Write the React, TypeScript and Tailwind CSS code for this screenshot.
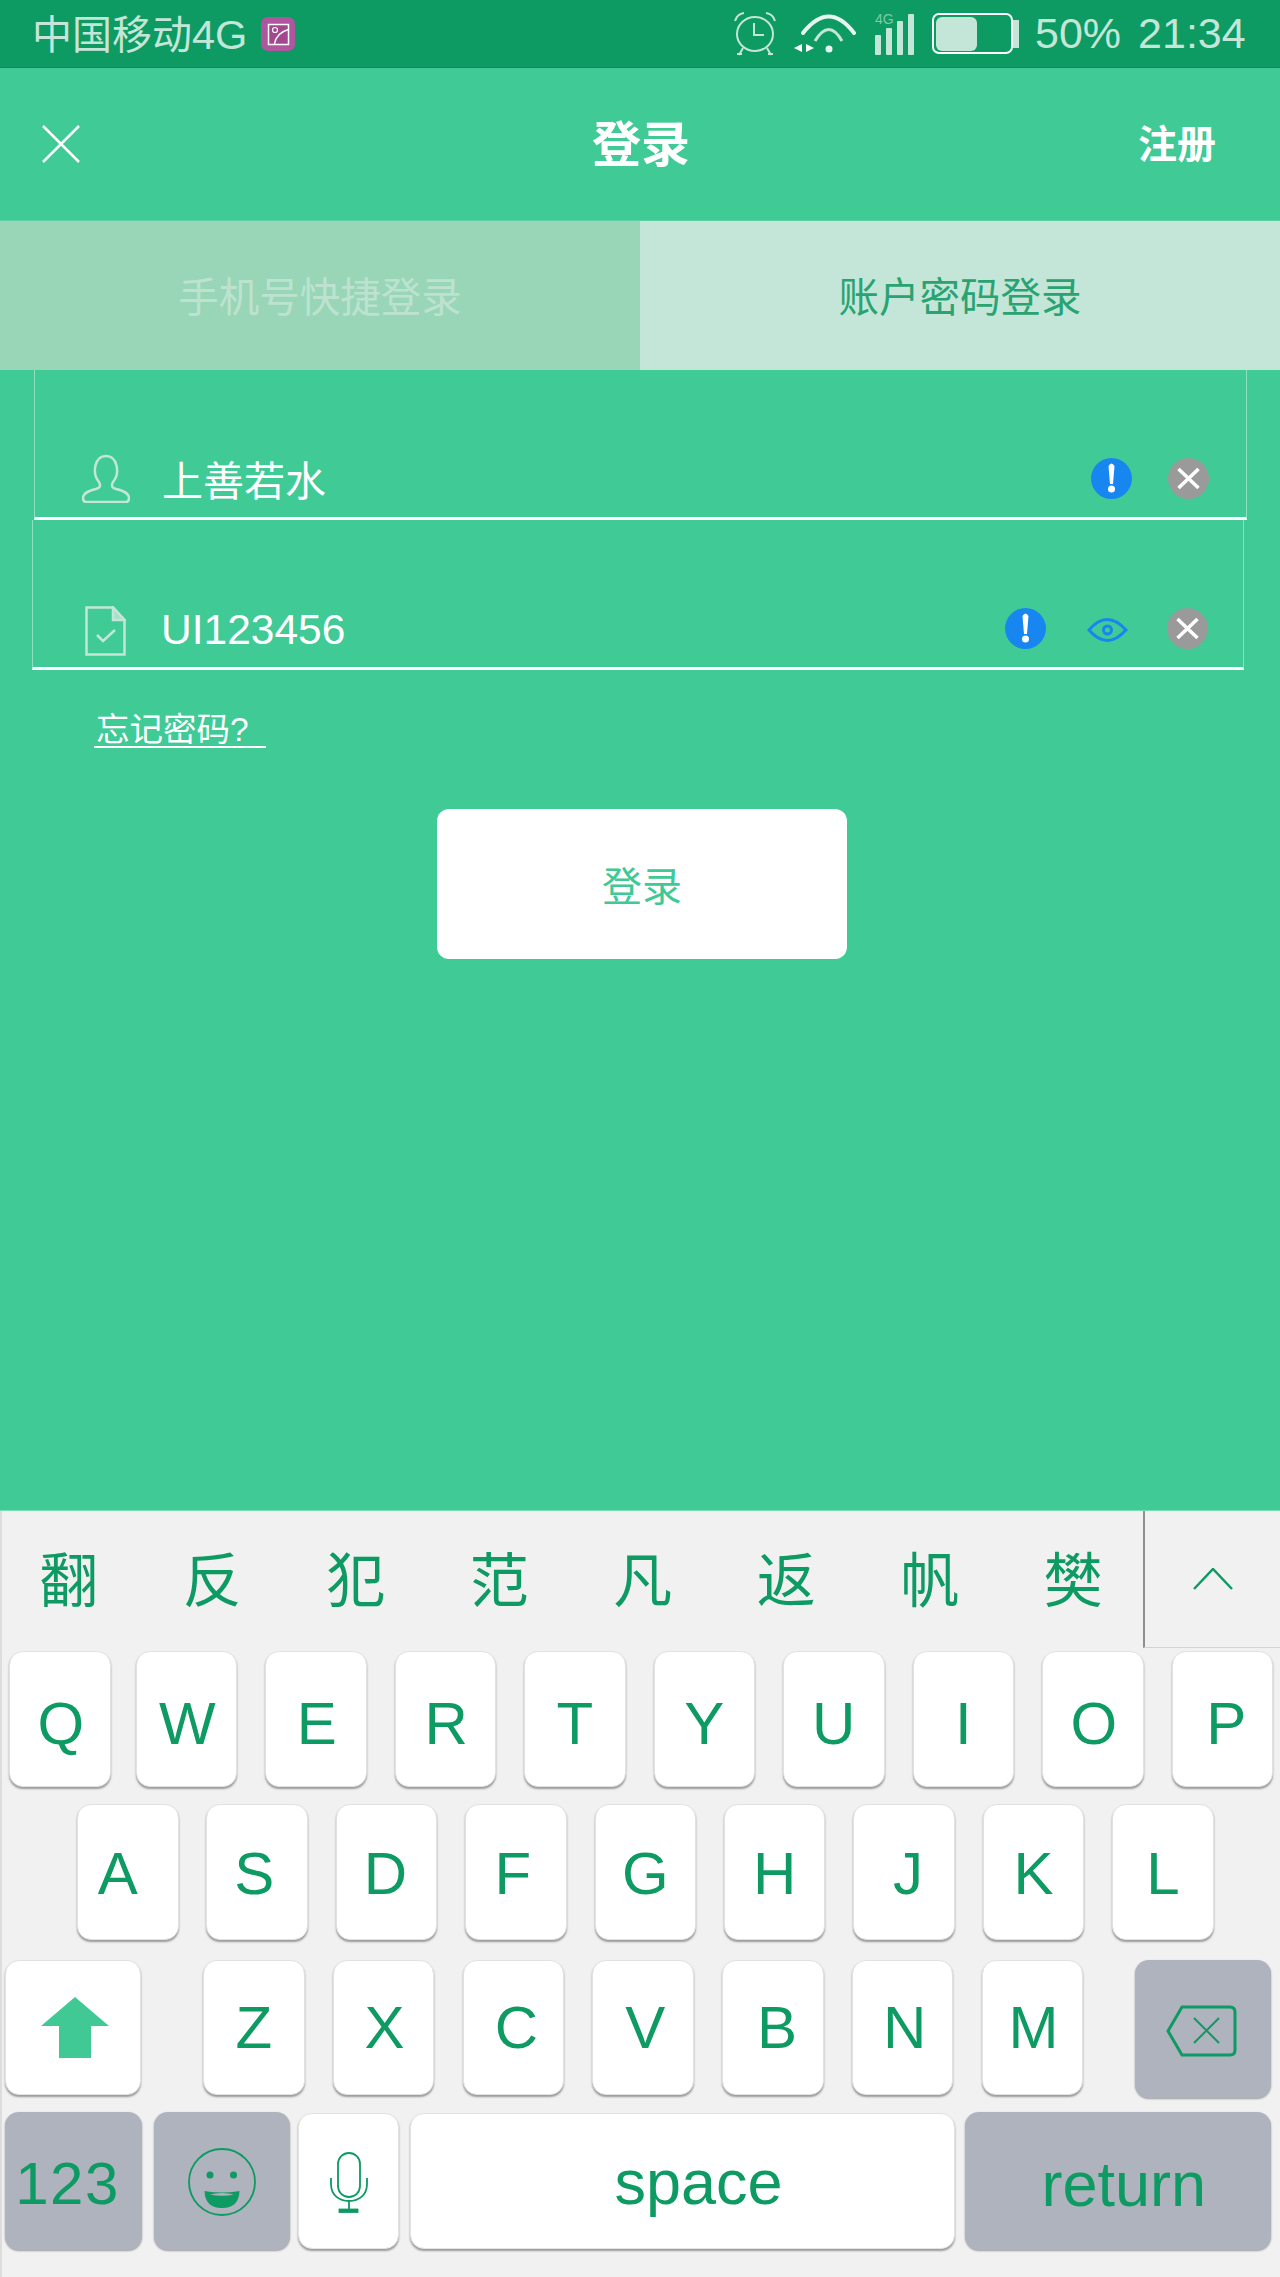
const cjk = "font-['Noto_Sans_CJK_SC','Liberation_Sans',sans-serif]";
const latin = "font-['Liberation_Sans',sans-serif]";

// the letters don't sit dead centre on the reference keys, so each gets its own nudge
const row1 = [
  { k: 'W', c: 'pt-[10px] pl-[2px]' },
  { k: 'E', c: 'pt-[10px] pl-[2px]' },
  { k: 'R', c: 'pt-[10px] pl-[2px]' },
  { k: 'T', c: 'pt-[10px]' },
  { k: 'Y', c: 'pt-[10px]' },
  { k: 'U', c: 'pt-[10px]' },
  { k: 'I', c: 'pt-[10px]' },
  { k: 'O', c: 'pt-[10px] pl-[2px]' },
  { k: 'P', c: 'pt-[10px] pl-[8px]' },
];
const row2 = [
  { k: 'A', c: 'pt-[4px] pr-[20px]' },
  { k: 'S', c: 'pt-[4px] pr-[6px]' },
  { k: 'D', c: 'pt-[4px] pr-[2px]' },
  { k: 'F', c: 'pt-[4px] pr-[6px]' },
  { k: 'G', c: 'pt-[4px]' },
  { k: 'H', c: 'pt-[4px]' },
  { k: 'J', c: 'pt-[4px] pl-[8px]' },
  { k: 'K', c: 'pt-[4px]' },
  { k: 'L', c: 'pt-[4px]' },
];
const row3 = [
  { k: 'Z', c: '' },
  { k: 'X', c: 'pl-[2px]' },
  { k: 'C', c: 'pl-[6px]' },
  { k: 'V', c: 'pl-[4px]' },
  { k: 'B', c: 'pl-[8px]' },
  { k: 'N', c: 'pl-[4px]' },
  { k: 'M', c: 'pl-[2px]' },
];
const candidates = ['翻', '反', '犯', '范', '凡', '返', '帆', '樊'];

function Key({ label, className = '' }: { label: string; className?: string }) {
  return (
    <div className={`flex h-full w-[101.5px] shrink-0 items-center justify-center rounded-[14px] border border-[#e2e2e2] bg-white text-[60px] text-[#0d9a63] shadow-[0_2px_2px_#9a9a9a] ${className}`}>
      {label}
    </div>
  );
}

function InfoIcon() {
  return (
    <svg width="41" height="41" viewBox="0 0 41 41" className="shrink-0">
      <circle cx="20.5" cy="20.5" r="20.5" fill="#1886f1" />
      <path d="M17.5 8 Q20.5 3 23.5 8 L22 26 H19 Z" fill="#fff" />
      <circle cx="20.5" cy="31" r="3.5" fill="#fff" />
    </svg>
  );
}

function ClearIcon() {
  return (
    <svg width="41" height="41" viewBox="0 0 41 41" className="shrink-0">
      <circle cx="20.5" cy="20.5" r="20.5" fill="#9a9a9a" />
      <path d="M10.5 11 L30.5 30 M30.5 11 L10.5 30" stroke="#fff" strokeWidth="3.5" />
    </svg>
  );
}

export default function App() {
  return (
    <div className={`flex h-[2277px] w-[1280px] flex-col overflow-hidden bg-[#40ca96] ${cjk}`}>
      {/* status bar */}
      <div className="flex h-[68px] shrink-0 items-center border-b border-[#0a8a58] bg-[#0d9a63] text-[#c4e6d8]">
        <span className="mt-[1px] ml-[32px] w-[216px] whitespace-nowrap text-[40px] leading-none">中国移动<span className={`text-[41.5px] ${latin}`}>4G</span></span>
        <svg width="34" height="34" viewBox="0 0 34 34" className="ml-[13px] shrink-0">
          <rect width="34" height="34" rx="7" fill="#b0559f" />
          <rect x="7.5" y="7.5" width="20" height="20" fill="#a3488f" stroke="#fff" strokeWidth="1.5" />
          <circle cx="14" cy="13" r="2.5" fill="none" stroke="#fff" strokeWidth="1.2" />
          <path d="M13.5 27 Q15 16 27.5 12.5" fill="none" stroke="#fff" strokeWidth="1.3" />
        </svg>
        <svg width="46" height="44" viewBox="0 0 46 44" className="ml-[437px] shrink-0" fill="none" stroke="#c4e6d8" strokeWidth="2">
          <ellipse cx="23" cy="22" rx="18" ry="17" />
          <path d="M22 11 V23 H32" />
          <path d="M3 9 Q5 2 12 1 M43 9 Q41 2 34 1" />
          <path d="M11 36 L7 43 M35 36 L39 43 M5 42 H10 M36 42 H41" />
        </svg>
        <svg width="62" height="42" viewBox="0 0 62 42" className="ml-[16px] shrink-0" fill="none">
          <path d="M9 20 Q35 -13 60 20" stroke="#e6f5ee" strokeWidth="4" strokeLinecap="round" />
          <path d="M21 28 Q35 5 48 28" stroke="#c4e6d8" strokeWidth="3" />
          <circle cx="35" cy="36" r="3.5" fill="#e6f5ee" />
          <path d="M0 35 L8 31 V39 Z M20 35 L12 31 V39 Z" fill="#fff" />
        </svg>
        <div className="relative ml-[19px] flex h-[42px] w-[39px] shrink-0 items-end justify-between">
          <span className={`absolute top-[-1px] left-0 text-[14px] leading-none text-[#7fc9a8] ${latin}`}>4G</span>
          <div className="h-[20px] w-[6px] rounded-[1px] bg-[#c4e6d8]" />
          <div className="h-[27px] w-[6px] rounded-[1px] bg-[#c4e6d8]" />
          <div className="h-[34px] w-[6px] rounded-[1px] bg-[#c4e6d8]" />
          <div className="h-[41px] w-[6px] rounded-[1px] bg-[#c4e6d8]" />
        </div>
        <div className="ml-[18px] flex h-[41px] w-[81px] shrink-0 items-center rounded-[7px] border-2 border-white pl-[2px]">
          <div className="h-[34px] w-[41px] rounded-[6px] bg-[#c4e6d8]" />
        </div>
        <div className="h-[28px] w-[6px] shrink-0 bg-[#c4e6d8]" />
        <span className={`ml-[16px] whitespace-nowrap text-[43px] leading-none ${latin}`}>50%</span>
        <span className={`ml-[17px] whitespace-nowrap text-[43px] leading-none ${latin}`}>21:34</span>
      </div>

      {/* nav bar */}
      <div className="flex h-[152px] shrink-0 items-center text-white">
        <svg width="38" height="38" viewBox="0 0 38 38" className="ml-[42px] shrink-0">
          <path d="M1 1 L37 37 M37 1 L1 37" stroke="#fff" strokeWidth="2.5" />
        </svg>
        <div className="mb-[8px] ml-[511px] w-[100px] text-center text-[49px] leading-none font-bold whitespace-nowrap">登录</div>
        <div className="mb-[6px] ml-[447px] text-[39px] leading-none font-bold whitespace-nowrap">注册</div>
      </div>

      {/* tabs */}
      <div className="flex h-[150px] shrink-0 border-t border-[#5fd0a5] text-[40.5px]">
        <div className="flex w-[640px] items-center justify-center bg-[#98d6b7] text-[#bde2cf]">手机号快捷登录</div>
        <div className="flex w-[640px] items-center justify-center bg-[#c4e6d8] text-[#2aa373]">账户密码登录</div>
      </div>

      {/* account */}
      <div className="ml-[34px] flex h-[150px] w-[1213px] shrink-0 items-end border-x border-b-[3px] border-x-[#8fe0c0] border-b-white pb-[9px]">
        <div className="flex h-[60px] w-full items-center">
          <svg width="48" height="49" viewBox="0 0 48 49" className="ml-[47px] shrink-0" fill="none" stroke="#c4e6d8" strokeWidth="2.5">
            <path d="M17 28 C10 20 12 2 24 2 C36 2 38 20 31 28 C29 32 30 34 34 35 C42 37 47 39 47 44 C47 47 46 48 44 48 H4 C2 48 1 47 1 44 C1 39 6 37 14 35 C18 34 19 32 17 28 Z" />
          </svg>
          <span className="ml-[32px] flex-1 text-[41px] leading-none text-white">上善若水</span>
          <InfoIcon />
          <div className="ml-[36px] mr-[37px]"><ClearIcon /></div>
        </div>
      </div>

      {/* password */}
      <div className="ml-[32px] flex h-[150px] w-[1212px] shrink-0 items-end border-x border-b-[3px] border-x-[#8fe0c0] border-b-white pb-[9px]">
        <div className="flex h-[60px] w-full items-center">
          <svg width="41" height="50" viewBox="0 0 41 50" className="mt-[6px] ml-[52px] shrink-0" fill="none" stroke="#c4e6d8" strokeWidth="2.5">
            <path d="M1.5 1.5 H28 L39.5 14 V48.5 H1.5 Z" />
            <path d="M28 1.5 V14 H39.5 Z" fill="#a3e3c8" />
            <path d="M12 29 L18 35 L30 24" strokeWidth="2.5" />
          </svg>
          <span className={`mt-[4px] ml-[35px] flex-1 text-[42.5px] leading-none text-white ${latin}`}>UI123456</span>
          <InfoIcon />
          <svg width="41" height="24" viewBox="0 0 41 24" className="mt-[4px] ml-[41px] shrink-0" fill="none" stroke="#1886f1" strokeWidth="3">
            <path d="M2 12 Q20 -9 39 12 Q20 33 2 12 Z" />
            <circle cx="20.5" cy="12" r="4" />
          </svg>
          <div className="ml-[39px] mr-[35px]"><ClearIcon /></div>
        </div>
      </div>

      {/* forgot */}
      <div className="mt-[38px] ml-[94px] h-[40px] w-[172px] shrink-0 border-b-2 border-white pl-[2px] text-[33.5px] leading-[38px] whitespace-nowrap text-white">
        忘记密码<span className={latin}>?</span>
      </div>

      <div className="mt-[61px] ml-[437px] flex h-[150px] w-[410px] shrink-0 items-center justify-center rounded-[12px] bg-white text-[40px] text-[#40c995]">
        登录
      </div>

      {/* keyboard */}
      <div className={`mt-auto h-[767px] shrink-0 border-t border-[#7fdcb8] bg-[#f1f1f1] shadow-[inset_2px_0_0_#dddddd] ${latin}`}>
        <div className="flex h-[137px]">
          <div className={`-ml-[3px] flex w-[1146px] shrink-0 items-center pb-[6px] ${cjk}`}>
            {candidates.map((c) => (
              <div key={c} className="w-[143.5px] shrink-0 text-center text-[59px] leading-none text-[#0d9a63]">{c}</div>
            ))}
          </div>
          <div className="flex flex-1 items-center justify-center border-b border-l-2 border-b-[#d4d4d4] border-l-[#8f8f8f]">
            <svg width="40" height="22" viewBox="0 0 40 22">
              <path d="M1 21 L20 1 L39 21" fill="none" stroke="#0d9a63" strokeWidth="2.5" />
            </svg>
          </div>
        </div>

        <div className="mt-[3px] flex h-[136px] gap-[28px] pl-[9px]">
          <Key label="Q" className="-mr-[3px] pt-[10px] pl-[2px]" />
          {row1.map((r) => <Key key={r.k} label={r.k} className={r.c} />)}
        </div>

        <div className="mt-[17px] flex h-[136px] gap-[27.9px] pl-[77px]">
          {row2.map((r) => <Key key={r.k} label={r.k} className={r.c} />)}
        </div>

        <div className="mt-[20px] flex h-[135px] pl-[5px]">
          <div className="flex h-full w-[136px] shrink-0 items-center justify-center rounded-[14px] border border-[#e2e2e2] bg-white shadow-[0_2px_2px_#9a9a9a]">
            <svg width="68" height="61" viewBox="0 0 68 61" className="ml-[4px]">
              <path d="M34 0 L68 29 H50 V61 H18 V29 H0 Z" fill="#40c995" />
            </svg>
          </div>
          <div className="ml-[62px] flex h-full gap-[28.3px]">
            {row3.map((r) => <Key key={r.k} label={r.k} className={r.c} />)}
          </div>
          <div className="ml-[51.5px] flex h-[138px] w-[136px] shrink-0 items-center justify-center rounded-[14px] bg-[#aeb3bd] pt-[4px] pr-[3px] shadow-[0_1px_2px_#9a9a9a]">
            <svg width="71" height="52" viewBox="0 0 71 52" fill="none" stroke="#0d9a63">
              <path d="M16 2 H64 Q69 2 69 7 V45 Q69 50 64 50 H16 L2 26 Z" strokeWidth="3" />
              <path d="M28 13 L53 38 M53 13 L28 38" strokeWidth="2" />
            </svg>
          </div>
        </div>

        <div className="mt-[17px] flex h-[138px] pl-[5px]">
          <div className="flex h-full w-[137px] shrink-0 items-center justify-center rounded-[14px] bg-[#aeb3bd] pt-[6px] pr-[12px] text-[60px] tracking-[1.5px] text-[#0d9a63] shadow-[0_1px_2px_#9a9a9a]">123</div>
          <div className="ml-[12px] flex h-full w-[136px] shrink-0 items-center justify-center rounded-[14px] bg-[#aeb3bd] shadow-[0_1px_2px_#9a9a9a]">
            <svg width="68" height="68" viewBox="0 0 68 68" fill="none" className="mt-[2px]">
              <circle cx="34" cy="34" r="33" stroke="#0d9a63" strokeWidth="1.8" />
              <circle cx="22" cy="27" r="3.5" fill="#0d9a63" />
              <circle cx="45.5" cy="27" r="3.5" fill="#0d9a63" />
              <path d="M16.5 43 Q34 46 51.5 43 Q51 60 34 60 Q17 60 16.5 43 Z" fill="#0d9a63" />
              <path d="M22 46.5 Q34 43.5 46 46.5 Q34 49 22 46.5 Z" fill="#aeb3bd" />
            </svg>
          </div>
          <div className="mt-[1px] ml-[8px] flex h-[136px] w-[101px] shrink-0 items-center justify-center rounded-[14px] border border-[#e2e2e2] bg-white shadow-[0_2px_2px_#9a9a9a]">
            <svg width="38" height="61" viewBox="0 0 38 61" fill="none" stroke="#0d9a63" strokeWidth="1.8" className="mt-[2px]">
              <rect x="8" y="1" width="22" height="44" rx="11" />
              <path d="M1 26 V32 C1 43 9 49 19 49 C29 49 37 43 37 32 V26" />
              <path d="M19 49 V58" />
              <rect x="9.5" y="57.5" width="18" height="2.5" fill="#0d9a63" />
            </svg>
          </div>
          <div className="mt-[1px] ml-[11px] flex h-[136px] w-[545px] shrink-0 items-center justify-center rounded-[14px] border border-[#e2e2e2] bg-white pt-[2px] pl-[32px] text-[63px] text-[#0d9a63] shadow-[0_2px_2px_#9a9a9a]">space</div>
          <div className="ml-[9.5px] flex h-full w-[306.5px] shrink-0 items-center justify-center rounded-[14px] bg-[#aeb3bd] pt-[6px] pl-[12px] text-[63px] text-[#0d9a63] shadow-[0_1px_2px_#9a9a9a]">return</div>
        </div>
      </div>
    </div>
  );
}
